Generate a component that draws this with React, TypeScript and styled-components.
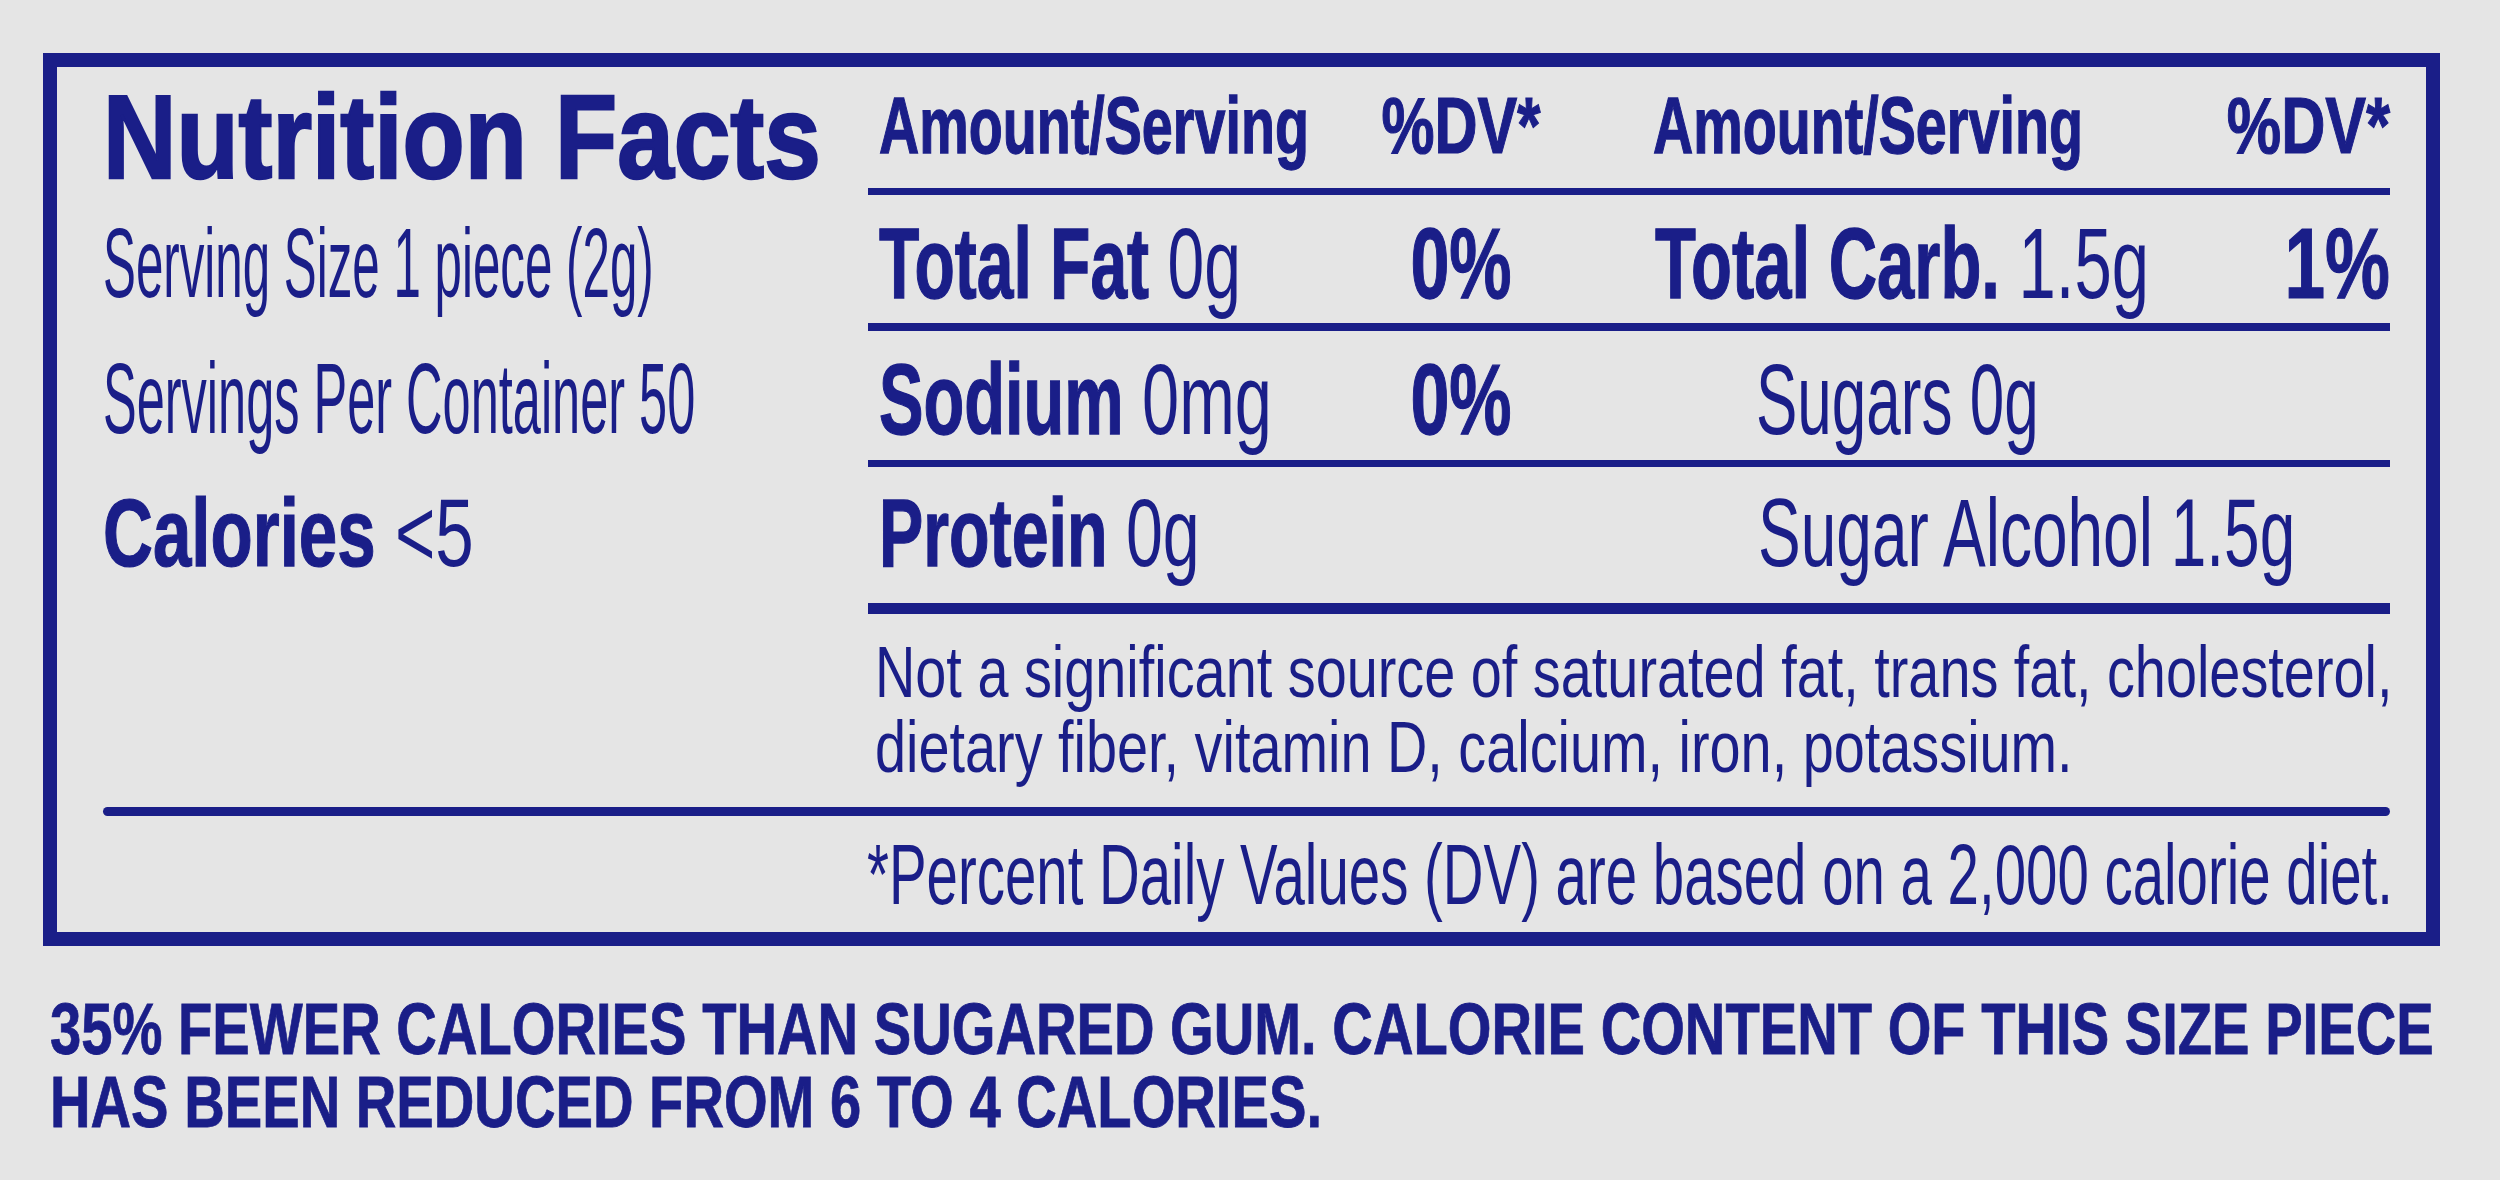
import React from "react";
import styled, { createGlobalStyle } from "styled-components";

const NAVY = "#1a1e88";
const PAPER = "#e5e5e5";
const FONT = `"Liberation Sans", Arial, Helvetica, sans-serif`;

const Global = createGlobalStyle`
  html, body { margin: 0; padding: 0; background: ${PAPER}; overflow: hidden; }
  #root { width: 2500px; height: 1180px; }
`;

const Page = styled.main`
  box-sizing: border-box;
  width: 2500px;
  height: 1180px;
  padding: 53px 0 0 43px;
  background: ${PAPER};
  color: ${NAVY};
  font-family: ${FONT};
  overflow: hidden;
`;

const Panel = styled.section`
  box-sizing: border-box;
  width: 2397px;
  height: 893px;
  border: 14px solid ${NAVY};
  padding: 0 36px 0 46px;
  display: flex;
  flex-direction: column;
`;

const Band = styled.div<{ $h: number }>`
  display: grid;
  grid-template-columns: 765px minmax(0, 1fr);
  height: ${(p) => p.$h}px;
`;

const Side = styled.div<{ $pt: number; $size: number }>`
  padding-top: ${(p) => p.$pt}px;
  font-size: ${(p) => p.$size}px;
  line-height: 1;
  white-space: nowrap;
`;

const Title = styled.h1`
  margin: 0;
  padding-top: 20px;
  font-size: 119px;
  line-height: 100px;
  font-weight: 700;
  white-space: nowrap;
  -webkit-text-stroke: 2.15px ${NAVY};
`;

const Cells = styled.div<{ $pt: number; $rule: number; $size: number }>`
  box-sizing: border-box;
  display: grid;
  grid-template-columns: 499px 166px minmax(0, 1fr) auto;
  align-items: start;
  padding: ${(p) => p.$pt}px 0 0 11px;
  border-bottom: ${(p) => p.$rule}px solid ${NAVY};
  font-size: ${(p) => p.$size}px;
  line-height: 1;
  white-space: nowrap;
`;

const Label = styled.div<{ $indent?: number }>`
  padding-left: ${(p) => p.$indent ?? 0}px;
  min-width: 0;
`;

const DvMid = styled.div`
  text-align: center;
`;

const DvEnd = styled.div`
  text-align: right;
`;

/* Condensed lettering: the text is set at a narrower size and stretched
   back up to full height around its baseline. */
const Sq = styled.span<{ $sx: number }>`
  display: inline-block;
  white-space: nowrap;
  font-size: ${(p) => p.$sx}em;
  line-height: 1;
  transform: scaleY(${(p) => 1 / p.$sx});
  transform-origin: 0 0.8465em;
`;

const B = styled.strong`
  font-weight: 700;
  -webkit-text-stroke: 0.9px ${NAVY};
`;

const R = styled.span`
  font-weight: 400;
`;

const Line = styled.span`
  display: block;
`;

const Footnote = styled.p`
  margin: 0;
  padding: 20px 0 0 7px;
  font-size: 73px;
  line-height: 75px;
  font-weight: 400;
  white-space: nowrap;
`;

const Rule = styled.div`
  height: 9px;
  border-radius: 5px;
  background: ${NAVY};
`;

const DvNote = styled.p`
  margin: 0;
  padding: 15px 0 0 764px;
  font-size: 86px;
  line-height: 86px;
  font-weight: 400;
  white-space: nowrap;
`;

const Claim = styled.p`
  margin: 47px 0 0 7px;
  font-size: 72px;
  line-height: 73px;
  font-weight: 700;
  white-space: nowrap;
  -webkit-text-stroke: 0.62px ${NAVY};
`;

export default function App() {
  return (
    <Page>
      <Global />
      <Panel>
        <Band $h={123}>
          <Title>
            <Sq $sx={0.855}>Nutrition Facts</Sq>
          </Title>
          <Cells $pt={19} $rule={7} $size={80}>
            <Label>
              <Sq $sx={0.696}>
                <B>Amount/Serving</B>
              </Sq>
            </Label>
            <DvMid>
              <Sq $sx={0.745}>
                <B>%DV*</B>
              </Sq>
            </DvMid>
            <Label $indent={109}>
              <Sq $sx={0.696}>
                <B>Amount/Serving</B>
              </Sq>
            </Label>
            <DvEnd>
              <Sq $sx={0.765}>
                <B>%DV*</B>
              </Sq>
            </DvEnd>
          </Cells>
        </Band>

        <Band $h={141}>
          <Side $pt={23} $size={99}>
            <Sq $sx={0.498}>Serving Size 1 piece (2g)</Sq>
          </Side>
          <Cells $pt={23} $rule={8} $size={100}>
            <Label>
              <Sq $sx={0.66}>
                <B>Total Fat</B> <R>0g</R>
              </Sq>
            </Label>
            <DvMid>
              <Sq $sx={0.7}>
                <B>0%</B>
              </Sq>
            </DvMid>
            <Label $indent={111}>
              <Sq $sx={0.67}>
                <B>Total Carb.</B> <R>1.5g</R>
              </Sq>
            </Label>
            <DvEnd>
              <Sq $sx={0.73}>
                <B>1%</B>
              </Sq>
            </DvEnd>
          </Cells>
        </Band>

        <Band $h={136}>
          <Side $pt={18} $size={100}>
            <Sq $sx={0.505}>Servings Per Container 50</Sq>
          </Side>
          <Cells $pt={18} $rule={7} $size={100}>
            <Label>
              <Sq $sx={0.667}>
                <B>Sodium</B> <R>0mg</R>
              </Sq>
            </Label>
            <DvMid>
              <Sq $sx={0.7}>
                <B>0%</B>
              </Sq>
            </DvMid>
            <Label $indent={212}>
              <Sq $sx={0.62}>Sugars 0g</Sq>
            </Label>
            <DvEnd />
          </Cells>
        </Band>

        <Band $h={147}>
          <Side $pt={18} $size={96}>
            <Sq $sx={0.72}>
              <B>Calories</B> <R>&lt;5</R>
            </Sq>
          </Side>
          <Cells $pt={17} $rule={11} $size={97}>
            <Label>
              <Sq $sx={0.684}>
                <B>Protein</B> <R>0g</R>
              </Sq>
            </Label>
            <DvMid />
            <Label $indent={214}>
              <Sq $sx={0.66}>Sugar Alcohol 1.5g</Sq>
            </Label>
            <DvEnd />
          </Cells>
        </Band>

        <Band $h={193}>
          <div />
          <Footnote>
            <Line>
              <Sq $sx={0.765}>
                Not a significant source of saturated fat, trans fat, cholesterol,
              </Sq>
            </Line>
            <Line>
              <Sq $sx={0.765}>dietary fiber, vitamin D, calcium, iron, potassium.</Sq>
            </Line>
          </Footnote>
        </Band>

        <Rule />

        <DvNote>
          <Sq $sx={0.656}>*Percent Daily Values (DV) are based on a 2,000 calorie diet.</Sq>
        </DvNote>
      </Panel>

      <Claim>
        <Line>
          <Sq $sx={0.78}>
            35% FEWER CALORIES THAN SUGARED GUM. CALORIE CONTENT OF THIS SIZE PIECE
          </Sq>
        </Line>
        <Line>
          <Sq $sx={0.78}>HAS BEEN REDUCED FROM 6 TO 4 CALORIES.</Sq>
        </Line>
      </Claim>
    </Page>
  );
}
